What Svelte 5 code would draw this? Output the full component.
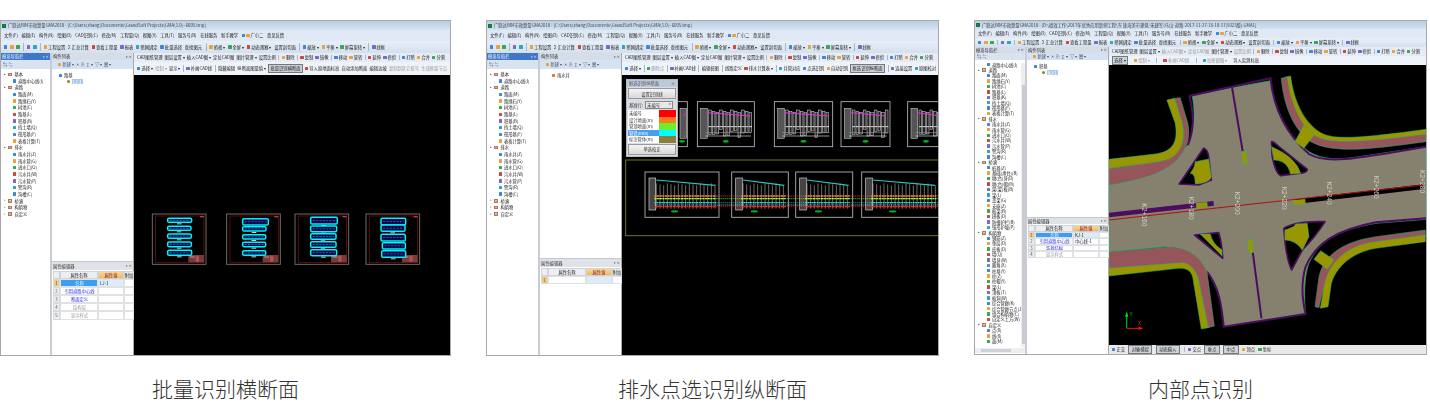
<script>
  const palette = ['#3f86d8', '#e8a33a', '#3aa655', '#c9483f', '#7a68c8', '#2aa5c4'];
  const color = (i) => palette[i % palette.length];

  const menu = ['文件(F)', '编辑(E)', '构件(N)', '绘图(D)', 'CAD识别(C)', '修改(M)', '工程量(Q)', '视图(V)', '工具(T)', '服务号(B)', '在线服务', '新手教学', '^^广小二', '意见反馈'];
  const toolA = ['^', '^', '^', '|', '^', '^', '|', '^工程设置', 'Σ 汇总计算', '^查看工程量', '^报表', '^断网绑定', '^批量选择', '查找图元'];
  const toolB = ['|', '^俯视 ▾', '^全屏 ▾', '^动态观察 ▾', '设置剖切面', '|', '^缩放 ▾', '^平移 ▾', '^屏幕旋转 ▾', '|', '^线框'];
  const cadRow = ['CAD图纸管理', '图层设置 ▾', '插入CAD图 ▾', '定位CAD图', '图片管理 ▾', '设置比例', '|', '^删除', '|', '^复制', '^镜像', '|', '^移动', '^旋转', '|', '^延伸', '^修剪', '|', '^打断', '^合并', '^分割'];
  const cadRowDim = ['CAD图纸管理', '图层设置 ▾', '-插入CAD图 ▾', '-定位CAD图', '图片管理 ▾', '-设置比例', '|', '^删除', '|', '^复制', '^镜像', '|', '^移动', '^旋转', '|', '^延伸', '^修剪', '|', '^打断', '^合并', '^分割'];

  const baseTree = [
    { name: '基本', items: ['道路中心线(I)'] },
    { name: '道路', items: ['路面(M)', '路缘石(Y)', '树池(C)', '路基(L)', '积基(B)', '挡土墙(Q)', '筏形基(F)', '表格计算(T)'] },
    { name: '排水', items: ['雨水井(Z)', '雨水管(G)', '进水口(O)', '污水井(W)', '污水管(P)', '窨沟(R)', '沟槽(C)'] },
    { name: '桥涵', items: [] },
    { name: '构筑物', items: [] },
    { name: '自定义', items: [] }
  ];
  const longTree = [
    { name: '', items: ['道路中心线(I)'] },
    { name: '道路', items: ['路面(M)', '路缘石(Y)', '树池(C)', '路基(L)', '积基(K)', '挡土墙(Q)', '筏形基(F)', '表格计算(T)'] },
    { name: '排水', items: ['雨水井(Z)', '雨水管(G)', '进水口(O)', '污水井(W)', '污水管(P)', '窨沟(R)', '沟槽(C)'] },
    { name: '桥涵', items: ['桩基(Z)', '基础(承台)(B)', '墩(台)身(D)', '墩(台)帽(M)', '架(梁)板(B)', '梁(L)', '盖梁(G)', '支座(Z)', '板梁(B)', '搭板(D)', '防撞护栏(B)', '锥形护坡(P)'] },
    { name: '构筑物', items: ['钢筋(Z)', '垫层(D)', '底板(D)', '墙(Q)', '墙身(W)', '腋角(X)', '柱基(Y)', '柱(Z)', '柱帽(Y)', '梁(L)', '顶板(T)', '板洞(W)', '综合管廊(K)', '综合管廊节点(J)', '组合构筑物(C)', '自定义土方(W)'] },
    { name: '自定义', items: ['点(X)', '线(X)', '面(M)'] }
  ];

  const windows = [
    {
      id: 'a', caption: '批量识别横断面', tree: baseTree, hotHead: true, cad: cadRow,
      title: '广联达BIM市政算量GMA2018 - [C:\\Users\\zhang\\Documents\\GrandSoft Projects\\GMA\\1.0\\~6005.tmp]',
      row3: ['^选择 ▾', '-绘制 ▾', '显示 ▾', '|', '^补画CAD线', '|', '隐藏编辑', '纵断面图量值 ▾', '[批量识别横断面]', '^导入原地面标高', '自动添加断面', '编辑边坡', '-复制到其它桩号', '-生成框架节点'],
      listRoot: '路基', listItem: 'LJ-1',
      props: [['名称', 'LJ-1', 'sel'], ['引用道路中心线', '', 'link'], ['断面定义', '', 'link'], ['结构层', '', 'dim'], ['显示样式', '', 'dim plus']]
    },
    {
      id: 'b', caption: '排水点选识别纵断面', tree: baseTree, hotHead: true, cad: cadRow,
      title: '广联达BIM市政算量GMA2018 - [C:\\Users\\zhang\\Documents\\GrandSoft Projects\\GMA\\1.0\\~6005.tmp]',
      row3: ['^选择 ▾', '|', '~删除点', '|', '^补画CAD线', '|', '编辑桩图', '|', '线路定义', '^排水计算表 ▾', '|', '^井管对应', '^点选识别', '^自动识别', '[框选识别纵断面]', '|', '^连接设置', '^原图校对'],
      listRoot: '', listItem: '',
      props: [['', '', 'selv']]
    },
    {
      id: 'c', caption: '内部点识别', tree: longTree, hotHead: false, cad: cadRowDim,
      title: '广联达BIM市政算量GMA2018 - [D:\\绩效工作\\2017年优秀应用案例工程\\东 珠海美市建筑-朱建军(马山-道路-2017-11-27-16-18-17(5023版).GMA1]',
      row3: ['[选择] ▾', '~绘制 ▾', '|', '~补画CAD线', '|', '~加密绑图 ▾', '导入实测标高'],
      listRoot: '积基', listItem: 'KJ-1',
      props: [['名称', 'KJ-1', 'sel'], ['引用道路中心线', '中心线-1', 'link'], ['装基结构', '', 'link'], ['显示样式', '', 'dim plus']]
    }
  ];

  const dlgColors = [['未编号', '#ff0000'], ['设计地面(m)', '#ff7a1a'], ['管顶地面(m)', '#6fef2a'], ['管径(mm)', '#00ffff', true], ['标注管体(m)', '#8a7f3c']];

  const crossSheets = [
    { x: 457, strips: [[503, 265, 72, 12], [503, 289, 70, 12], [503, 312, 71, 13], [503, 336, 71, 14], [503, 361, 72, 15]] },
    { x: 680, strips: [[728, 266, 77, 19], [728, 290, 70, 13], [728, 314, 69, 13], [728, 337, 69, 13], [728, 362, 69, 14]] },
    { x: 885, strips: [[932, 262, 80, 20], [932, 288, 78, 17], [932, 311, 76, 17], [932, 335, 76, 17], [932, 359, 78, 18]] },
    { x: 1098, strips: [[1143, 265, 74, 20], [1143, 285, 72, 19], [1143, 313, 73, 20], [1147, 338, 69, 19], [1145, 362, 72, 20]] }
  ];

  const topSheets = [{ x: 590, w: 32 }, { x: 652, w: 171 }, { x: 883, w: 175 }, { x: 1083, w: 147 }, { x: 1283, w: 110 }];
  const lowSheets = [{ x: 495, w: 222 }, { x: 755, w: 170 }, { x: 947, w: 171 }, { x: 1145, w: 232 }];
  const bars = (s, step) => {
    const out = [];
    for (let x = s.x + 34; x < s.x + s.w - 10; x += step) out.push(x);
    return out;
  };
  const dotted = [[558, '#ff5a20'], [566, '#8dff2a'], [578, '#20d8d8'], [585, '#e0e0e0'], [590, '#ff2020']];
  const stations = [['K2+160', 531, 580], ['K2+180', 670, 560], ['K2+200', 808, 545], ['K2+220', 948, 530], ['K2+240', 1083, 515], ['K2+260', 1223, 497], ['K2+280', 1361, 480]];
</script>

{#snippet strip(items, cls)}
  <div class="strip {cls}">
    {#each items as item, i}
      {#if item === '|'}
        <i class="sep"></i>
      {:else if item.startsWith('[')}
        <span class="btn pressed">{item.replace(/[[\]]/g, '')}</span>
      {:else}
        <span class="btn" class:off={item.startsWith('~') || item.startsWith('-')}>
          {#if item.startsWith('^') || item.startsWith('~')}<b class="ic" style="background:{color(i)}"></b>{/if}
          {#if item.startsWith('^^')}<b class="ic" style="background:{color(i + 1)}"></b>{/if}
          {item.replace(/^[\^~-]+/, '')}
        </span>
      {/if}
    {/each}
  </div>
{/snippet}

{#snippet sheetsA()}
  <svg class="draw" viewBox="402 -165 948 840" preserveAspectRatio="none">
    {#each crossSheets as s}
      <rect x={s.x} y="252" width="161" height="151" fill="#000" stroke="#6a6a6a" stroke-width="3" />
      <rect x={s.x + 10} y="258" width="145" height="140" fill="none" stroke="#7c1010" stroke-width="2" />
      <rect x={s.x + 108} y="375" width="47" height="22" fill="#7d3a3a" />
      <rect x={s.x + 113} y="380" width="14" height="2" fill="#e8c8c8" />
      <rect x={s.x + 130} y="377" width="10" height="18" fill="#a55" />
      <rect x={s.x + 143} y="258" width="12" height="4" fill="#d33" />
      {#each s.strips as r}
        <rect x={r[0]} y={r[1]} width={r[2]} height={r[3]} rx="4" fill="#000048" stroke="#00f4f4" stroke-width="4.5" />
        <line x1={r[0] + 6} y1={r[1] + r[3] / 2} x2={r[0] + r[2] - 6} y2={r[1] + r[3] / 2} stroke="#2f8fe0" stroke-width="2" stroke-dasharray="7 3" />
        <rect x={r[0] + r[2] / 2 - 8} y={r[1] + r[3] + 3} width="14" height="3" fill="#cfcfcf" />
      {/each}
    {/each}
  </svg>
{/snippet}

{#snippet sheetsB()}
  <svg class="draw" viewBox="426 195 948 840" preserveAspectRatio="none">
    {#each topSheets as s}
      <rect x={s.x} y="275" width={s.w} height="135" fill="#000" stroke="#bdbdbd" stroke-width="2.5" />
      <rect x={s.x + 10} y="295" width="20" height="90" fill="#555" stroke="#ddd" stroke-width="1.5" />
      {#each bars(s, 11) as x, i}
        <rect x={x} y={300 + (i % 3) * 4} width="8" height={74 - (i % 4) * 5} fill="#222" stroke="#e0e0e0" stroke-width="1.5" />
        <line x1={x} y1="350" x2={x + 9} y2="350" stroke="#fff" stroke-width="2.5" />
      {/each}
      <line x1={s.x + 24} y1="378" x2={s.x + s.w - 10} y2="378" stroke="#ddd" stroke-width="2" />
      <line x1={s.x + 24} y1="368" x2={s.x + s.w - 10} y2="368" stroke="#999" stroke-width="2" />
      <line x1={s.x + 28} y1="308" x2={s.x + s.w - 12} y2="318" stroke="#e22fe2" stroke-width="3" />
      <ellipse cx={s.x + s.w / 2} cy="394" rx="9" ry="4" fill="#00b020" />
    {/each}
    <rect x="437" y="450" width="945" height="227" fill="none" stroke="#77770a" stroke-width="3" />
    {#each lowSheets as s}
      <rect x={s.x} y="486" width={s.w} height="136" fill="#000" stroke="#a0a0a0" stroke-width="3" />
      <rect x={s.x + 12} y="504" width="20" height="96" fill="#444" stroke="#cfcfcf" stroke-width="2" />
      {#each bars(s, 11) as x, i}
        <line x1={x} y1={520 + (i % 3) * 3} x2={x} y2="596" stroke="#d8d8d8" stroke-width="1.5" />
      {/each}
      <line x1={s.x + 34} y1="510" x2={s.x + s.w - 12} y2="526" stroke="#28c8c0" stroke-width="3.5" />
      <line x1={s.x + 28} y1="558" x2={s.x + s.w - 8} y2="558" stroke="#ff8a30" stroke-width="4" stroke-dasharray="6 2" />
      <line x1={s.x + 28} y1="566" x2={s.x + s.w - 8} y2="566" stroke="#a8ff30" stroke-width="3.5" stroke-dasharray="6 2" />
      <line x1={s.x + 28} y1="578" x2={s.x + s.w - 8} y2="578" stroke="#30e0e0" stroke-width="4" stroke-dasharray="5 2" />
      <line x1={s.x + 28} y1="590" x2={s.x + s.w - 8} y2="590" stroke="#ff3030" stroke-width="4" stroke-dasharray="6 2" />
      <ellipse cx={s.x + s.w * 0.4} cy="604" rx="11" ry="3.5" fill="#00b020" />
    {/each}
    {#each dotted as d}
      <line x1="526" y1={d[0]} x2="1374" y2={d[0]} stroke={d[1]} stroke-width="2.5" stroke-dasharray="3 3" />
    {/each}
  </svg>
{/snippet}

{#snippet roadC()}
  <svg class="draw" viewBox="432 165 948 840" preserveAspectRatio="none">
    <path d="M432 525C530 510 600 480 668 405C690 350 690 300 680 255L915 212C925 300 960 370 1030 425C1070 450 1120 450 1180 440L1380 410V628L1230 640C1120 660 1060 690 1030 760C1015 800 1015 860 1020 910L775 950C770 880 760 830 725 785C690 740 650 710 600 710L432 725Z" fill="#86806f" stroke="#1db97a" stroke-width="2" />
    <g fill="none" stroke="#4d0d5e" stroke-width="6">
      <path d="M672 258L915 205C925 300 965 375 1030 432C1080 462 1150 450 1380 410" />
      <path d="M1380 625L1230 637C1110 660 1050 700 1020 770C1005 820 1010 870 1020 912L775 950C768 880 760 830 725 785" />
      <path d="M672 258C690 320 682 370 668 405" />
      <path d="M800 232L832 425" />
      <path d="M852 690L855 695M862 727L888 925" />
    </g>

    <g stroke="#1db97a" stroke-width="1.5">
      <path d="M432 475C500 465 560 458 600 448C640 425 665 405 650 340L628 265L645 263L668 340Q680 400 640 445C600 490 530 510 432 525Z" fill="#96555a" />
      <path d="M432 448L570 432C620 425 640 400 630 340L605 270L628 265L650 335C665 400 640 440 600 450C560 460 500 465 432 475Z" fill="#9a9600" />
      <path d="M958 202L975 198C985 270 1010 330 1060 365C1100 392 1180 385 1380 358V382C1200 405 1100 415 1050 385C1000 355 970 280 958 202Z" fill="#9a9600" />
      <path d="M947 205L965 200C975 280 1005 345 1045 375C1090 405 1200 395 1380 372V395C1200 420 1100 430 1035 395C985 360 955 290 947 205Z" fill="#96555a" />
      <path d="M1015 345L1045 375L1015 415L988 395Z" fill="#9a9600" />
      <path d="M1378 660L1230 680C1130 695 1075 735 1060 800L1048 890L1060 893C1075 820 1100 760 1170 720C1230 695 1300 690 1378 680Z" fill="#96555a" />
      <path d="M1378 675L1230 695C1150 705 1090 750 1075 830L1064 895L1087 890L1097 820C1115 760 1170 725 1230 715L1378 695Z" fill="#9a9600" />
      <path d="M1065 722L1105 750L1085 778L1045 748Z" fill="#9a9600" />
      <path d="M432 725L620 710C680 715 710 750 725 785L747 948L728 953L700 810C690 775 670 772 640 772L432 785Z" fill="#96555a" />
      <path d="M432 775L650 758C680 758 695 790 700 810L729 953L708 957L682 800C675 780 665 775 640 775L432 798Z" fill="#9a9600" />
      <path d="M827 425L843 423L846 462L833 464Z" fill="#9a9600" />
      <path d="M847 690L862 688L864 727L849 729Z" fill="#9a9600" />
    </g>

    <g fill="#000" stroke="#4d0d5e" stroke-width="5" stroke-linejoin="round">
      <path d="M642 522L715 415Q728 420 730 440L738 510L700 525Z" />
      <path d="M918 395Q925 395 940 410L1025 478Q1025 490 1000 490L945 497Q930 490 920 440Z" />
      <path d="M688 675L760 668Q770 700 772 745Z" />
      <path d="M955 655Q990 632 1078 635Q1050 680 1010 720L978 780Q960 740 955 655Z" />
    </g>
    <g fill="#9a9600" stroke="#1db97a" stroke-width="1.5">
      <path d="M690 455L730 447L738 500Q735 518 690 522Q690 490 675 490Q690 470 690 455Z" />
      <path d="M918 410Q990 440 1005 490L975 492Q965 450 925 450Z" />
      <path d="M705 672L735 672Q740 700 770 720L770 738Z" />
      <path d="M958 660Q990 650 990 642L1025 640L1030 680L1010 720Q990 690 958 690Z" />
    </g>

    <path d="M432 615L745 580" stroke="#4d0d5e" stroke-width="14" />
    <path d="M990 575L1372 530" stroke="#000" stroke-width="14" />
    <path d="M692 580L725 576L727 592L694 596Z" fill="#9a9600" stroke="#1db97a" />
    <path d="M983 571L1018 567L1020 582L985 586Z" fill="#9a9600" stroke="#1db97a" />
    <path d="M432 630L1378 524" stroke="#b01010" stroke-width="3" />

    {#each stations as s}
      <text class="station" x={s[1]} y={s[2]} transform="rotate(90 {s[1]} {s[2]})">{s[0]}</text>
    {/each}

    <path d="M485 955V910" stroke="#00e000" stroke-width="3" />
    <path d="M485 955H530" stroke="#ff1010" stroke-width="3" />
    <path d="M485 905L480 920H490Z" fill="#00e000" />
    <path d="M535 955L520 950V960Z" fill="#ff1010" />
    <text class="axis y" x="493" y="918">Y</text>
    <text class="axis x" x="519" y="946">X</text>
  </svg>
{/snippet}

<div class="page">
  {#each windows as w}
    <figure class="card {w.id}">
      <div class="win">
        <div class="title"><b class="appicon"></b>{w.title}</div>
        {@render strip(menu, 'menu')}
        <div class="toolline">
          {@render strip(toolA, 'tool')}
          {@render strip(toolB, 'tool')}
        </div>
        <div class="body">
          <aside class="nav">
            <div class="head" class:hot={w.hotHead}><span>模块导航栏</span><span class="pin">▾ ×</span></div>
            <div class="subhead">⇆ ⇋</div>
            <div class="tree">
              {#each w.tree as group}
                {#if group.name}
                  <div class="node">
                    <i class="arrow">{group.items.length ? '▴' : '▹'}</i><b class="folder"></b>{group.name}
                  </div>
                {/if}
                {#each group.items as item, i}
                  <div class="leaf"><b class="ic" style="background:{color(i)}"></b>{item}</div>
                {/each}
              {/each}
            </div>
            {#if w.id === 'c'}
              <div class="vscroll"><i></i></div>
              <div class="hscroll"><i></i></div>
            {/if}
          </aside>
          <div class="mid">
            <div class="head"><span>构件列表</span><span class="pin">▾ ×</span></div>
            <div class="subhead blue"><b class="ic one"></b>新建 ▾ &nbsp;✕ &nbsp;⎘ &nbsp;↕ ▾ &nbsp;▽ ▾ &nbsp;層 ▾</div>
            <div class="list">
              {#if w.listRoot}
                <div class="lroot"><b class="ic two"></b>{w.listRoot}</div>
                <div class="litem"><b class="dot"></b><span>{w.listItem}</span></div>
              {:else}
                <div class="lroot flat"><b class="ic three"></b>雨水井</div>
              {/if}
            </div>
            <div class="props">
              <div class="head thin"><span>属性编辑器</span><span class="pin">▾ ×</span></div>
              <div class="table">
                <span class="th"></span><span class="th">属性名称</span><span class="th val">属性值</span><span class="th">附加</span>
                {#each w.props as p, i}
                  <span class="idx" class:on={i === 0}>{i + 1}</span>
                  <span class="cell name {p[2]}">{p[0]}</span>
                  <span class="cell" class:valon={i === 0}>{p[1]}</span>
                  <span class="cell"></span>
                {/each}
              </div>
            </div>
          </div>
          <div class="work">
            {@render strip(w.cad, 'rowcad')}
            {@render strip(w.row3, 'row3')}
            <div class="canvas">
              {#if w.id === 'a'}{@render sheetsA()}{/if}
              {#if w.id === 'b'}
                {@render sheetsB()}
                <div class="dialog">
                  <div class="dlgtitle"><span>框选识别纵断面</span><span>×</span></div>
                  <div class="dlgbtn">设置识别线</div>
                  <div class="dlgsel"><span>基准行:</span><em>未编号 <u>▾</u></em></div>
                  <div class="dlglist">
                    {#each dlgColors as d}
                      <div class="dlgrow" class:sel={d[2]}><span>{d[0]}</span><i style="background:{d[1]}"></i></div>
                    {/each}
                  </div>
                  <div class="dlgbtn">单选校正</div>
                </div>
              {/if}
              {#if w.id === 'c'}{@render roadC()}{/if}
            </div>
            {#if w.id === 'c'}
              {@render strip(['^正交', '[对象捕捉]', '[动态输入]', '|', '^交点', '[垂点]', '[中点]', '^顶点', '^坐标'], 'status')}
            {/if}
          </div>
        </div>
      </div>
      <figcaption>{w.caption}</figcaption>
    </figure>
  {/each}
</div>

<style>
  :global(body) { margin: 0; background: #fff; }
  .page {
    display: flex; gap: 35px; height: 404px; padding-top: 20px; box-sizing: border-box;
    overflow: hidden; width: 1430px;
    font-family: "Noto Sans CJK SC", "Liberation Sans", sans-serif;
  }
  .card { margin: 0; width: 453px; flex: none; display: flex; flex-direction: column; --title: 9px; --menu: 11px; --tool: 12px; --r2: 9px; --r3: 13px; --nav: 51px; --props: 97px; --row: 8.1px; --leaf: 6.67px; --win: 336px; --sub: 9px; }
  .card.a { width: 451px; --nav: 49px; --props: 94px; }
  .card.c { --title: 8px; --menu: 9px; --tool: 9px; --r3: 9px; --leaf: 5.43px; --win: 335px; --props: 137px; --nav: 50px; --row: 6.5px; --sub: 7px; }

  .win {
    height: var(--win); box-sizing: border-box; border: 1px solid #a9a9a9; background: #fff;
    display: flex; flex-direction: column; overflow: hidden; color: #222;
    font-size: 4.3px; line-height: 1; white-space: nowrap; filter: blur(0.25px);
  }
  .title { height: var(--title); flex: none; display: flex; align-items: center; gap: 2px; padding-left: 1px; background: linear-gradient(#b9cfe6, #d3e1f0); color: #444; }
  .appicon { width: 4px; height: 4px; background: #2c7a3c; border: .5px solid #174; box-sizing: border-box; }

  .strip { display: flex; align-items: center; flex: none; gap: 2.6px; padding-left: 3px; overflow: hidden; box-sizing: border-box; max-width: 100%; }
  .strip.menu { height: var(--menu); background: #dfe8f4; gap: 3.6px; }
  .toolline { height: var(--tool); flex: none; display: flex; background: linear-gradient(#e8eff8, #d4e0ee); }
  .strip.tool { height: 100%; gap: 2.8px; }
  .strip.rowcad { height: var(--r2); background: #e5ecf5; gap: 2.1px; }
  .strip.row3 { height: var(--r3); background: #eef3f9; gap: 2.2px; }
  .card.c .strip.row3 { gap: 6px; }
  .strip.status { height: 9px; background: #e9e9e9; gap: 3.4px; }
  .btn { display: inline-flex; align-items: center; gap: 1px; }
  .btn.off { color: #999; }
  .btn.pressed { background: #cdd3da; border: .6px solid #777; padding: 1.4px 1.2px; }
  .strip.status .btn.pressed { padding: 1.4px 2.4px; }
  .sep { width: .6px; height: 60%; background: #a8b8c8; margin: 0 .5px; }
  .ic { display: inline-block; width: 3.4px; height: 3.4px; flex: none; border-radius: .5px; }
  .ic.one { background: #e8a33a; }
  .ic.two { background: #3f86d8; }
  .ic.three { background: #e07a3a; }

  .body { flex: 1; min-height: 0; display: flex; }
  .nav { width: var(--nav); flex: none; position: relative; display: flex; flex-direction: column; border-right: 2px solid #c9ccd2; }
  .head { height: 7px; flex: none; display: flex; justify-content: space-between; align-items: center; padding: 0 1px; background: #d4dde8; color: #333; }
  .card.c .head { height: 6px; }
  .head.hot { background: #3f78c8; color: #eaf2ff; }
  .head.thin { height: 8px; background: #dfe3e8; }
  .pin { font-size: 3.4px; }
  .subhead { height: var(--sub); flex: none; display: flex; align-items: center; gap: 1px; padding-left: 2px; background: #d9e3ef; font-size: 4.3px; color: #456; }
  .subhead.blue { background: #d4e2f2; padding-left: 6px; }
  .tree { padding: 2px 0 0 3px; flex: 1; overflow: hidden; }
  .node, .leaf { height: var(--leaf); display: flex; align-items: center; gap: 1px; }
  .leaf { padding-left: 9px; gap: 1.5px; }
  .arrow { font-style: normal; font-size: 3px; width: 3px; color: #444; }
  .folder { width: 4.4px; height: 3.6px; background: linear-gradient(#f7d774, #d9a52f); border: .3px solid #a77; box-sizing: border-box; margin-right: 1px; }
  .vscroll { position: absolute; right: 0; top: 16px; bottom: 7px; width: 4px; background: #eceef1; }
  .vscroll i { position: absolute; left: .5px; right: .5px; top: 22px; bottom: 3px; background: #c8ccd2; }
  .hscroll { position: absolute; left: 0; right: 0; bottom: 1px; height: 5px; background: #eceef1; }
  .hscroll i { position: absolute; left: 6px; width: 30px; top: 1px; bottom: 1px; background: #cfd3d9; }

  .mid { width: 82px; flex: none; display: flex; flex-direction: column; border-right: .6px solid #aaa; box-sizing: border-box; }
  .list { flex: 1; padding: 3px 0 0 4px; }
  .lroot { display: flex; align-items: center; gap: 1.5px; height: 6.5px; padding-left: 3px; }
  .lroot.flat { padding-left: 8px; }
  .litem { display: flex; align-items: center; gap: 2px; height: 6.5px; padding-left: 11px; }
  .litem span { background: #a9c8ee; color: #fff; padding: .5px 1px; }
  .dot { width: 3px; height: 3px; border-radius: 50%; background: #8a8a10; }
  .props { height: var(--props); flex: none; border-top: 1.5px solid #c5c8cc; box-sizing: border-box; }
  .table { display: grid; grid-template-columns: 7px 38px 26px 10px; grid-auto-rows: var(--row); margin: 1px 0 0 1px; }
  .th { background: #eceef1; border: .3px solid #d0d3d8; display: flex; align-items: center; justify-content: center; }
  .th.val { background: linear-gradient(#fbd88e, #f3b95c); color: #7a1a4a; }
  .idx { background: #eceef1; border: .3px solid #d8dade; display: flex; align-items: center; justify-content: center; color: #555; }
  .idx.on { background: #f8c878; }
  .cell { border: .3px solid #dfe1e4; display: flex; align-items: center; padding-left: 1px; min-width: 0; overflow: hidden; }
  .cell.name { justify-content: center; }
  .cell.sel { background: #3d9df0; color: #e8f4ff; }
  .cell.valon { background: #dcecfb; }
  .cell.link { color: #2a2ae8; }
  .cell.dim { color: #999; }
  .cell.selv { background: #fff; }

  .work { flex: 1; min-width: 0; display: flex; flex-direction: column; }
  .canvas { flex: 1; min-height: 0; position: relative; background: #000; overflow: hidden; }
  .draw { display: block; width: 100%; height: 100%; }
  .station { font: 20px "Liberation Sans", sans-serif; fill: #cfcfc4; }
  .axis { font: 14px "Liberation Sans", sans-serif; }
  .axis.y { fill: #00e000; }
  .axis.x { fill: #ff2020; }

  .dialog { position: absolute; left: 4px; top: 4px; width: 52px; height: 78px; box-sizing: border-box; background: #d9dde2; border: .6px solid #b5bac0; display: flex; flex-direction: column; gap: 1.4px; padding: 0 1px 1px; color: #333; }
  .dlgtitle { height: 7px; display: flex; justify-content: space-between; align-items: center; background: #bcc9d8; margin: 0 -1px; padding: 0 2px; color: #556; }
  .dlgbtn { height: 9px; background: linear-gradient(#f4f4f4, #d8d8d8); border: .4px solid #999; display: flex; align-items: center; justify-content: center; flex: none; }
  .dlgsel { height: 8px; display: flex; align-items: center; gap: 2px; padding-left: 1px; }
  .dlgsel em { font-style: normal; flex: 1; background: #e8e8e8; border: .4px solid #888; display: flex; justify-content: space-between; padding: 1px; margin-right: 3px; }
  .dlgsel u { text-decoration: none; font-size: 3px; }
  .dlglist { background: #fff; flex: 1; display: flex; flex-direction: column; }
  .dlgrow { flex: 1; display: flex; justify-content: space-between; align-items: center; padding-left: 1px; }
  .dlgrow i { width: 17px; height: 100%; }
  .dlgrow.sel { background: #4a9cf0; color: #fff; }

  figcaption { margin-top: 20px; text-align: center; font-size: 21px; line-height: 24px; color: #333; font-weight: 300; white-space: nowrap; }
  .card.c figcaption { margin-top: 21px; }
</style>
